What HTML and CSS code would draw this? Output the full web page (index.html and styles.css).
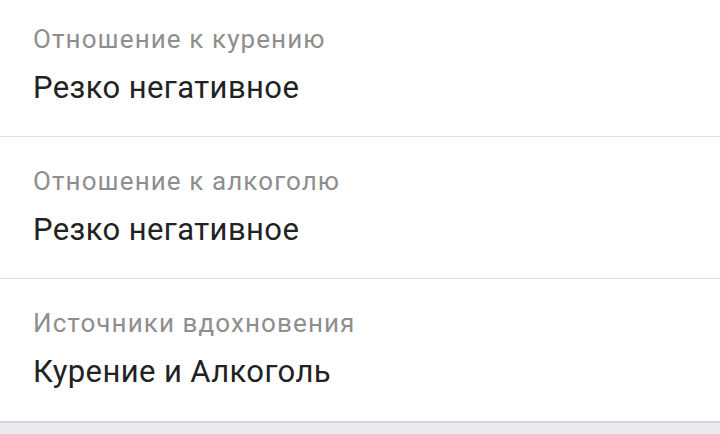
FILE: index.html
```html
<!DOCTYPE html>
<html lang="ru">
<head>
    <meta charset="UTF-8">
    <meta name="viewport" content="width=device-width, initial-scale=1.0">
    <title>Личная информация</title>
    <link rel="stylesheet" href="styles.css">
</head>
<body>
    <div class="lista">
        <div class="fila">
            <div class="etiqueta">Отношение к курению</div>
            <div class="valor">Резко негативное</div>
        </div>
        <div class="fila">
            <div class="etiqueta">Отношение к алкоголю</div>
            <div class="valor">Резко негативное</div>
        </div>
        <div class="fila">
            <div class="etiqueta">Источники вдохновения</div>
            <div class="valor">Курение и Алкоголь</div>
        </div>
    </div>
</body>
</html>
```

FILE: styles.css
```css
body {
    margin: 0;
    background-color: #e9ebee;
    font-family: Roboto, "Noto Sans", sans-serif;
}

.lista {
    margin-top: -5px;
    background-color: #fff;
    border-bottom: 2px solid #d6d6d6; /* borde inferior */
}

.fila {
    height: 142px;
    box-sizing: border-box;
    padding: 28px 33px 0;
    border-bottom: 1px solid #e1e1e1;
}

.fila:last-child {
    border-bottom: none;
}

.etiqueta {
    font-size: 26px;
    line-height: 32px;
    letter-spacing: 1.1px;
    color: #8e8e8e;
}

.valor {
    margin-top: 14px;
    font-size: 31px;
    line-height: 38px;
    letter-spacing: 0.4px;
    color: #222;
}
```
